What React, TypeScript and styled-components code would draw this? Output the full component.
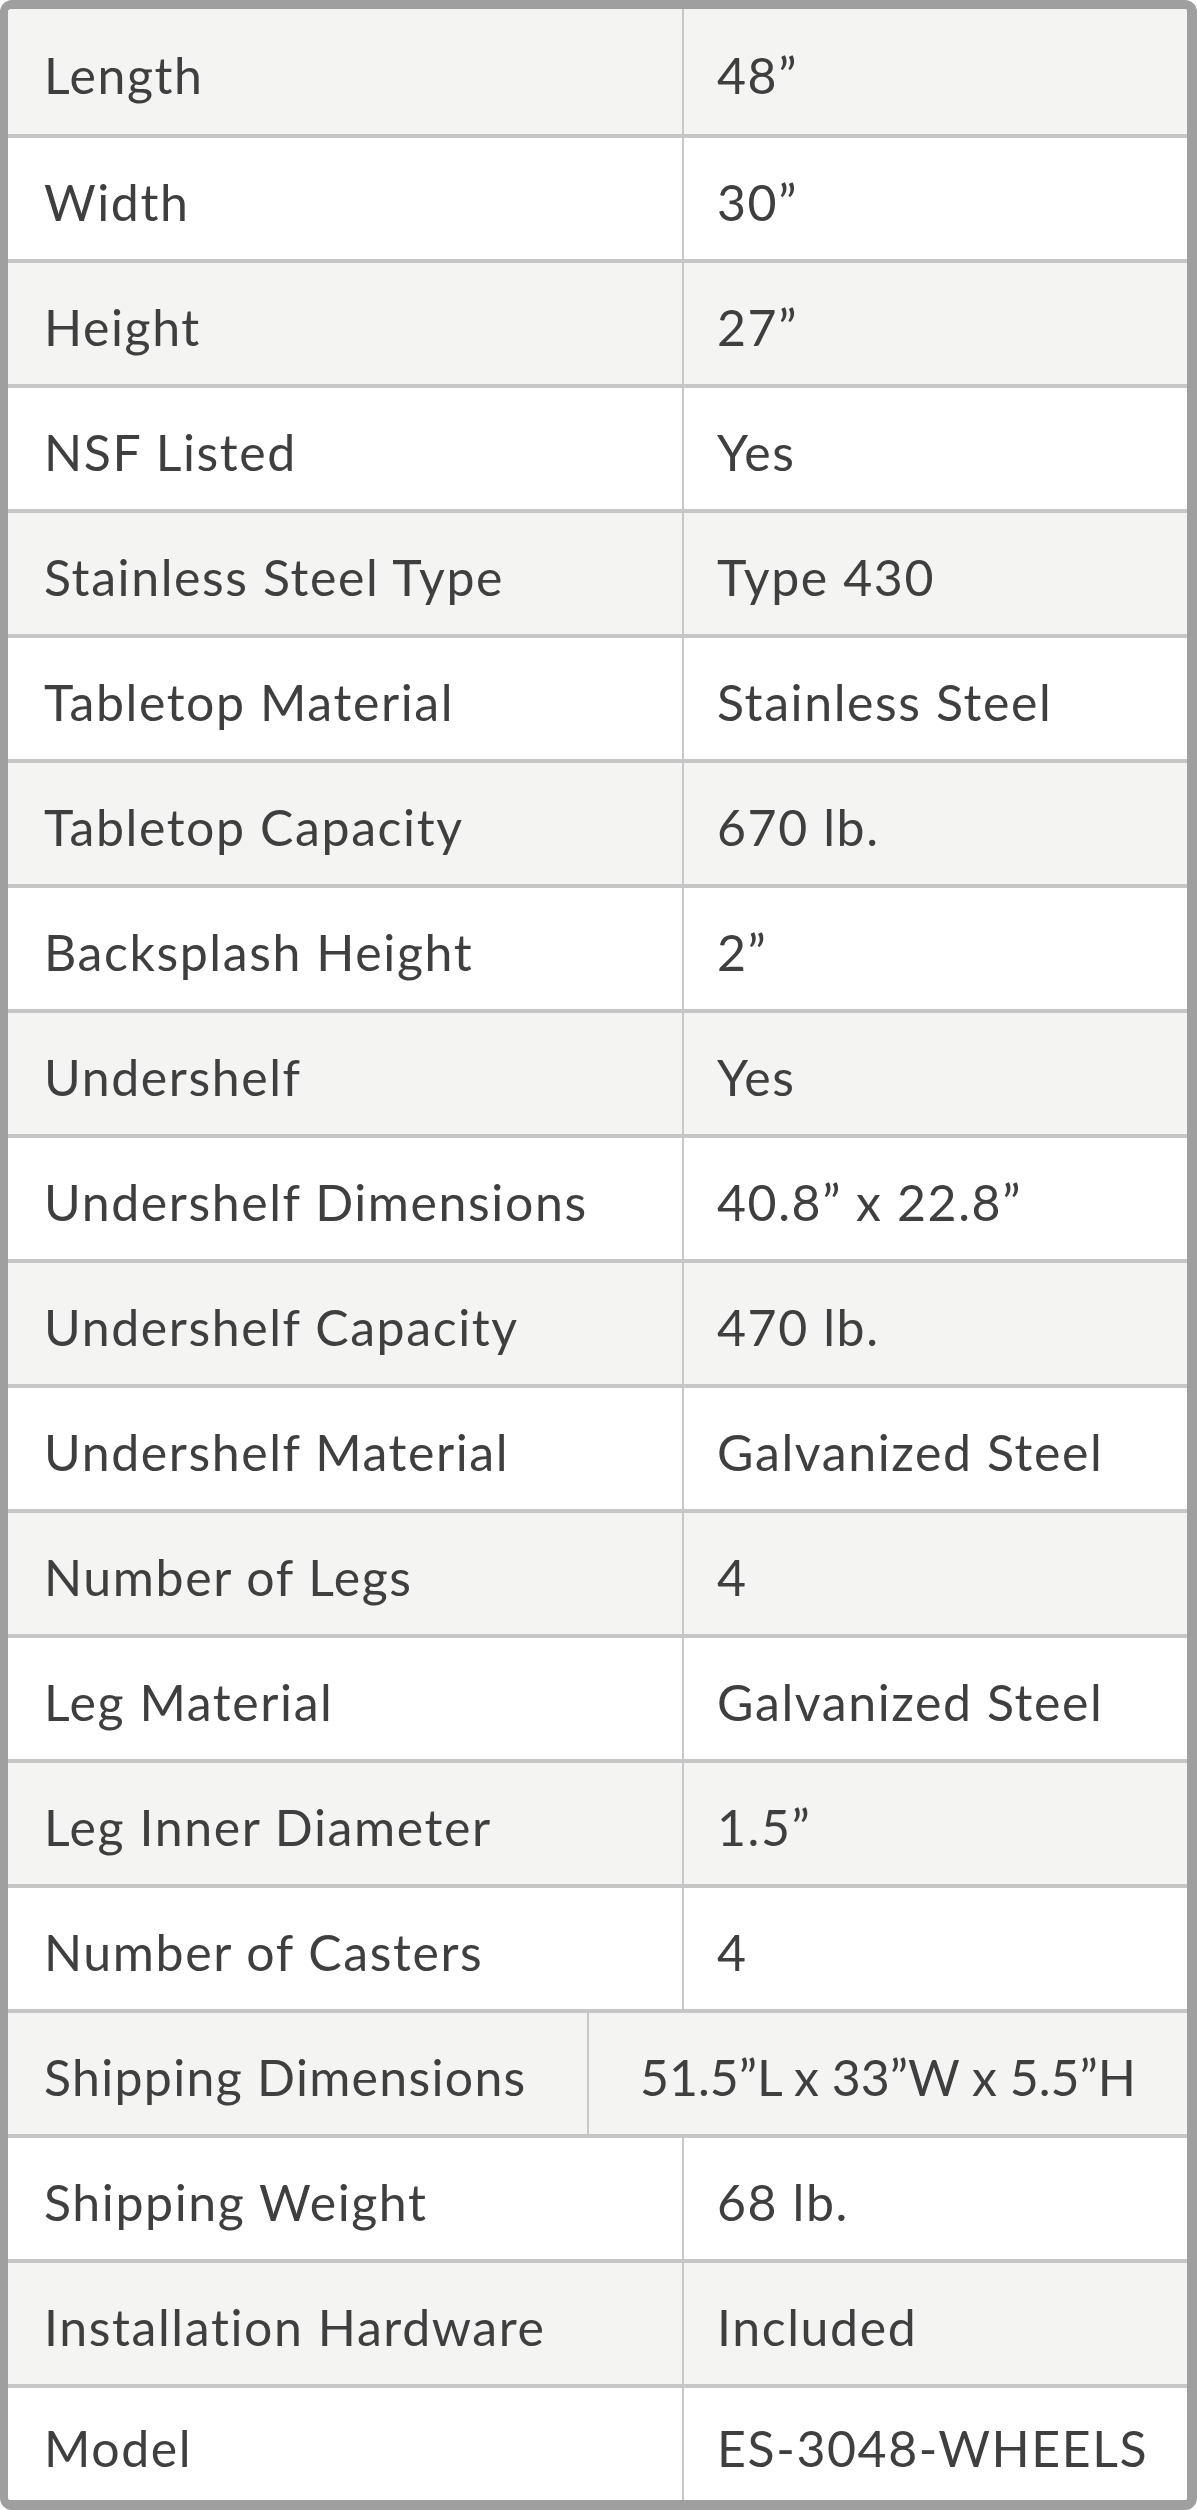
import React from "react";
import styled, { createGlobalStyle } from "styled-components";

const Global = createGlobalStyle`
  html, body { margin: 0; padding: 0; background: #ffffff; }
  body { font-family: "Lato", "Open Sans", sans-serif; }
`;

const Table = styled.div`
  box-sizing: border-box;
  width: 1197px;
  height: 2510px;
  border-style: solid;
  border-color: #a09fa0;
  border-width: 9px 10px 10px 8px;
  border-radius: 12px;
  overflow: hidden;
  display: flex;
  flex-direction: column;
  background: #ffffff;
`;

const Row = styled.div<{ $shade: boolean; $pos: "first" | "mid" | "last" }>`
  display: flex;
  flex: none;
  height: ${(p) => (p.$pos === "first" ? 125 : p.$pos === "last" ? 113 : 121)}px;
  border-top: ${(p) => (p.$pos === "first" ? "none" : "4px solid #c6c6c6")};
  background: ${(p) => (p.$shade ? "#f4f4f3" : "#ffffff")};
`;

const LabelCell = styled.div<{ $wide: boolean }>`
  box-sizing: border-box;
  width: ${(p) => (p.$wide ? 579 : 674)}px;
  flex: none;
  display: flex;
  align-items: center;
  padding-left: 36px;
  padding-top: 6px;
`;

const ValueCell = styled.div<{ $center: boolean }>`
  box-sizing: border-box;
  flex: 1;
  display: flex;
  align-items: center;
  justify-content: ${(p) => (p.$center ? "center" : "flex-start")};
  border-left: 2px solid #c8c8c8;
  padding-left: ${(p) => (p.$center ? 0 : 33)}px;
  padding-top: 6px;
`;

const Text = styled.span<{ $spacing: number }>`
  font-family: "Lato", "Open Sans", sans-serif;
  font-size: 50px;
  color: #3f3f3f;
  letter-spacing: ${(p) => p.$spacing}px;
  white-space: nowrap;
  line-height: 1;
  display: inline-block;
`;

type Spec = { label: string; value: string; special?: boolean };

const rows: Spec[] = [
  { label: "Length", value: "48”" },
  { label: "Width", value: "30”" },
  { label: "Height", value: "27”" },
  { label: "NSF Listed", value: "Yes" },
  { label: "Stainless Steel Type", value: "Type 430" },
  { label: "Tabletop Material", value: "Stainless Steel" },
  { label: "Tabletop Capacity", value: "670 lb." },
  { label: "Backsplash Height", value: "2”" },
  { label: "Undershelf", value: "Yes" },
  { label: "Undershelf Dimensions", value: "40.8” x 22.8”" },
  { label: "Undershelf Capacity", value: "470 lb." },
  { label: "Undershelf Material", value: "Galvanized Steel" },
  { label: "Number of Legs", value: "4" },
  { label: "Leg Material", value: "Galvanized Steel" },
  { label: "Leg Inner Diameter", value: "1.5”" },
  { label: "Number of Casters", value: "4" },
  { label: "Shipping Dimensions", value: "51.5”L x 33”W x 5.5”H", special: true },
  { label: "Shipping Weight", value: "68 lb." },
  { label: "Installation Hardware", value: "Included" },
  { label: "Model", value: "ES-3048-WHEELS" },
];

export default function App() {
  return (
    <>
      <Global />
      <Table>
        {rows.map((r, i) => (
          <Row
            key={r.label}
            $shade={i % 2 === 0}
            $pos={i === 0 ? "first" : i === rows.length - 1 ? "last" : "mid"}
          >
            <LabelCell $wide={!!r.special}>
              <Text $spacing={r.special ? 1.3 : 1.6}>{r.label}</Text>
            </LabelCell>
            <ValueCell $center={!!r.special}>
              <Text $spacing={r.special ? 0 : 1.6}>{r.value}</Text>
            </ValueCell>
          </Row>
        ))}
      </Table>
    </>
  );
}
